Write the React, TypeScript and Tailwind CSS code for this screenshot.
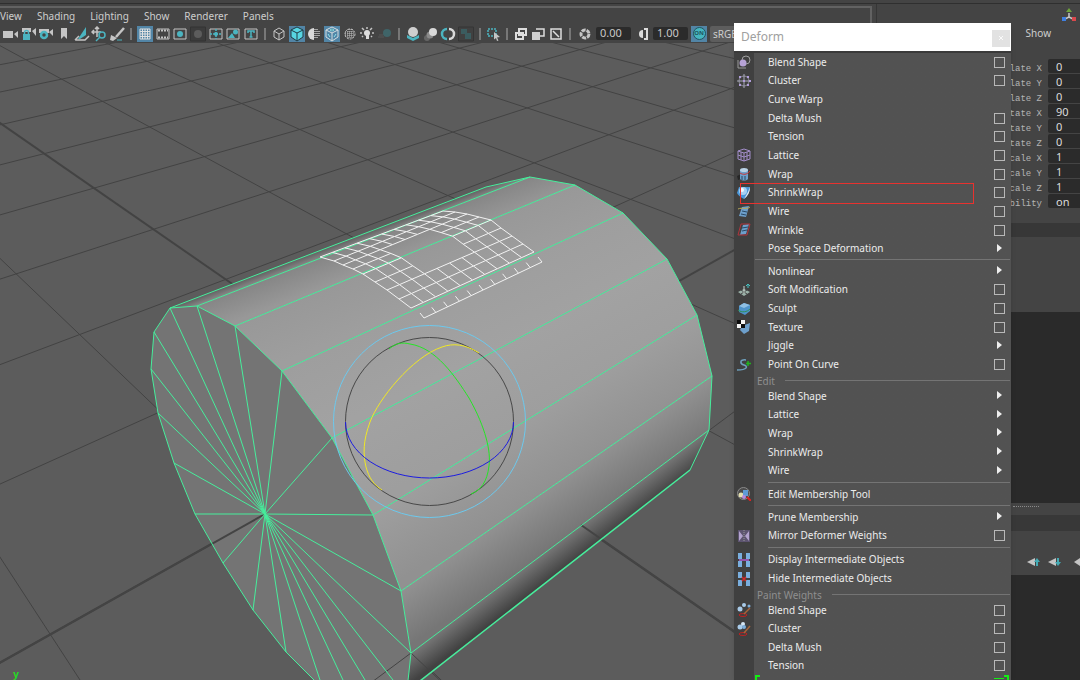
import type { ReactNode } from "react";

type Pt = [number, number];

// ---------- viewport ----------

// ground plane, u/v in grid units around the origin
function project(u: number, v: number): Pt {
  const w = 1 + 0.1378 * u + 0.1212 * v;
  return [(430 - 71.05 * u + 195.95 * v) / w, (421 - 32.3 * u - 29.8 * v) / w];
}

function lerp(a: Pt, b: Pt, t: number): Pt {
  return [a[0] + (b[0] - a[0]) * t, a[1] + (b[1] - a[1]) * t];
}

function Line({ a, b }: { a: Pt; b: Pt }) {
  return <line x1={a[0]} y1={a[1]} x2={b[0]} y2={b[1]} />;
}

const gridLines: { a: Pt; b: Pt; axis: boolean }[] = [];
for (let v = -2; v <= 14; v++) {
  gridLines.push({ a: project(20, v), b: project(-3, v), axis: v === 0 });
}
for (let u = -2; u <= 16; u++) {
  gridLines.push({ a: project(u, u < 0 ? -3 : -4), b: project(u, 20), axis: u === 0 });
}

const front: Pt[] = [
  [170, 308], [197, 306], [235, 326], [282, 371], [332, 438],
  [373, 515], [401, 591], [411, 653], [407, 690],
];
const back: Pt[] = [
  [486, 187], [530, 177], [575, 185], [623, 213], [667, 259],
  [697, 315], [712, 376], [709, 430], [690, 470],
];
const shades = ["#626262", "#868686", "#989898", "#9e9e9e", "#a2a2a2", "#9e9e9e", "#919191", "#767676", "#424242"];
const rimLeft: Pt[] = [
  [314, 680], [286, 652], [253, 610], [223, 563], [195, 514],
  [174, 463], [158, 413], [151, 369], [154, 332], [170, 308],
];
const center: Pt = [265, 514];
const bottomSpokes: Pt[] = [[320, 680], [343, 680], [365, 680], [393, 680]];

const patchLeft: Pt[] = [
  [320, 257], [334, 261], [343, 265], [353, 269], [363, 274],
  [375, 282], [387, 290], [399, 299], [411, 308],
];
const patchRight: Pt[] = [
  [443, 211], [455, 212], [467, 214], [479, 217], [491, 220],
  [501, 228], [512, 236], [523, 244], [534, 252],
];

function points(list: Pt[]) {
  return list.map((p) => p.join(",")).join(" ");
}

function Strip({ i }: { i: number }) {
  const a = front[i];
  const b = back[i];
  const c = back[i + 1];
  const d = front[i + 1];
  // shade runs across the strip, perpendicular to its edges
  const mid = lerp(a, b, 0.5);
  const dir: Pt = [b[0] - a[0], b[1] - a[1]];
  const len = Math.hypot(dir[0], dir[1]);
  const normal: Pt = [-dir[1] / len, dir[0] / len];
  const other = lerp(d, c, 0.5);
  const dist = (other[0] - mid[0]) * normal[0] + (other[1] - mid[1]) * normal[1];
  return (
    <>
      <linearGradient
        id={`strip-${i}`}
        gradientUnits="userSpaceOnUse"
        x1={mid[0]}
        y1={mid[1]}
        x2={mid[0] + normal[0] * dist}
        y2={mid[1] + normal[1] * dist}
      >
        <stop offset="0" stopColor={shades[i]} />
        <stop offset="1" stopColor={shades[i + 1]} />
      </linearGradient>
      <polygon points={points([a, b, c, d])} fill={`url(#strip-${i})`} />
    </>
  );
}

function Patch() {
  const cells: ReactNode[] = [];
  for (let row = 0; row <= 8; row++) {
    for (let col = 0; col < 10; col++) {
      if (row > 2 && row < 6 && col >= 3 && col < 7) continue;
      const l = patchLeft[row];
      const r = patchRight[row];
      cells.push(<Line key={`r${row}-${col}`} a={lerp(l, r, col / 10)} b={lerp(l, r, (col + 1) / 10)} />);
    }
  }
  for (let col = 0; col <= 10; col++) {
    for (let row = 0; row < 8; row++) {
      if (col > 3 && col < 7 && row >= 2 && row < 6) continue;
      const a = lerp(patchLeft[row], patchRight[row], col / 10);
      const b = lerp(patchLeft[row + 1], patchRight[row + 1], col / 10);
      cells.push(<Line key={`c${row}-${col}`} a={a} b={b} />);
    }
    const p = lerp([424, 318], [542, 262], col / 10);
    cells.push(<Line key={`t${col}`} a={p} b={[p[0] - 4, p[1] - 5]} />);
  }
  return (
    <g stroke="#f2f2f2" strokeWidth="1">
      {cells}
      <Line a={[424, 318]} b={[542, 262]} />
    </g>
  );
}

function Viewport() {
  return (
    <svg viewBox="0 43 872 637" preserveAspectRatio="xMinYMin slice" className="block h-full w-full bg-[#5c5c5c]" role="img" aria-label="Perspective view">
      <g stroke="#434343">
        {gridLines.map((l, i) => (
          <g key={i} strokeWidth={l.axis ? 2 : 1}>
            <Line a={l.a} b={l.b} />
          </g>
        ))}
      </g>
      <polygon points={points([...rimLeft, ...front.slice(1)])} fill="#747474" />
      {front.slice(0, -1).map((_, i) => (
        <Strip key={i} i={i} />
      ))}
      <g stroke="#444444">
        <g strokeWidth="2">
          <Line a={center} b={project(0, -3)} />
          <Line a={[581, 525]} b={project(-3, 0)} />
        </g>
        <Line a={[411, 653]} b={project(-1, -2)} />
        <Line a={[411, 653]} b={project(-2, -1)} />
      </g>
      <g stroke="#46ee9c" fill="none">
        <polyline points={points(rimLeft)} />
        <polyline points={points(front)} />
        <polyline points={points(back)} />
        {front.slice(0, -1).map((p, i) => (
          <Line key={i} a={p} b={back[i]} />
        ))}
        <g strokeWidth="1.5">
          <Line a={[420, 681]} b={[690, 470]} />
        </g>
        {[...rimLeft.slice(1), ...front.slice(1, -1), ...bottomSpokes].map((p, i) => (
          <Line key={i} a={center} b={p} />
        ))}
      </g>
      <Patch />
      <g fill="none">
        <circle cx="429.5" cy="421.5" r="96" stroke="#6cc9ee" />
        <circle cx="429.5" cy="421.5" r="84" stroke="#484848" />
        <path d="M389 349C396 343 402 342 410 344C436 348 455 376 469 398C486 428 491 452 489 466C487 482 481 490 471 494" stroke="#25e625" />
        <path d="M479 353C465 344 453 343 442 347C412 357 378 400 370 422C363 441 363 454 366 467C369 478 374 485 382 490" stroke="#f0e824" />
        <path d="M345.5 422A84 56 0 0 0 513.5 422" stroke="#1c1ce0" />
      </g>
      <text x="13" y="678" fill="#1fe01f" fontSize="10" fontWeight="bold" fontFamily="Liberation Mono, monospace">y</text>
    </svg>
  );
}

// ---------- toolbar ----------

const T = "#4bb4c0";
const G = "#c4c4c4";

const tools: Record<string, ReactNode> = {
  camera: <path d="M0 5h10v7H0zM11 8l4-3v7z" fill={G} />,
  cameraLock: (
    <>
      <path d="M1 2h9v4H1zM11 5l4-3v8z" fill={G} />
      <path d="M2 8h7v6H2z" fill={T} />
      <path d="M3.5 8V6.5a2 2 0 0 1 4 0V8" stroke={T} strokeWidth="1.5" fill="none" />
    </>
  ),
  cameraGear: (
    <>
      <path d="M1 3h10v4H1zM11 6l4-3v7z" fill={G} />
      <circle cx="6" cy="9" r="3" stroke={T} strokeWidth="2.5" fill="#444" />
    </>
  ),
  bookmark: <path d="M5 2h6v11l-3-3-3 3z" fill={G} />,
  plane: (
    <>
      <path d="M4 13l8-12v8l-6 4z" fill={T} />
      <path d="M1 14l4-4M1 14h10l4-4" fill="none" stroke={G} strokeWidth="1.5" />
    </>
  ),
  panZoom: (
    <>
      <path d="M6 1v10M1 6h9M4 3l2-2 2 2M3 4L1 6l2 2" stroke={G} strokeWidth="1.5" fill="none" />
      <circle cx="11" cy="9" r="3" stroke={T} strokeWidth="1.5" fill="#444" />
      <path d="M9 11l-4 4" stroke={T} strokeWidth="1.5" />
    </>
  ),
  brush: (
    <>
      <path d="M15 2L7 11" stroke={G} strokeWidth="2.5" />
      <path d="M2 9l6 3-4 3-3-1z" fill={G} />
      <path d="M8 14h5" stroke={T} />
    </>
  ),
  grid: <path d="M3 3h10v10H3zM5.5 3v10M8 3v10M10.5 3v10M3 5.5h10M3 8h10M3 10.5h10" stroke="#e0e0e0" fill="none" />,
  film: (
    <>
      <path d="M2 3h12v10H2z" stroke={G} fill="none" />
      <path d="M3 4.5h10M3 11.5h10" stroke={G} strokeDasharray="2 1" strokeWidth="2" />
    </>
  ),
  gate: (
    <>
      <path d="M2 3h12v10H2z" stroke={G} fill="none" />
      <circle cx="8" cy="8" r="3" fill={T} />
    </>
  ),
  mask: (
    <>
      <path d="M.5 1h15v14H.5z" stroke="#333" fill="#3c3c3c" />
      <circle cx="8" cy="8" r="4" fill="#5c5c5c" />
    </>
  ),
  chart: (
    <>
      <path d="M2 3h12v10H2z" stroke={G} fill="none" />
      <path d="M8 3v10M2 8h12" stroke={T} strokeDasharray="2 1" strokeWidth="1.5" />
      <circle cx="8" cy="8" r="2" fill={T} />
    </>
  ),
  picture: (
    <>
      <path d="M2 3h12v10H2z" stroke={G} fill="none" />
      <circle cx="10.5" cy="6" r="2.5" fill={T} />
      <path d="M3 12l4-5 3 5z" fill={T} />
    </>
  ),
  title: (
    <>
      <path d="M2 3h12v10H2z" stroke={G} fill="none" />
      <path d="M5 7V5h6v2M8 5v6M6.5 11h3" stroke={T} strokeWidth="1.5" fill="none" />
    </>
  ),
  cube: <path d="M8 2l5 3v6l-5 3-5-3V5zM3 5l5 3 5-3M8 8v6" stroke={G} fill="none" />,
  cubeSolid: (
    <>
      <path d="M8 1l6 3v7l-6 4-6-4V4z" fill="#57d5e2" stroke="#213a44" />
      <path d="M2 4l6 3 6-3M8 7v8" stroke="#213a44" fill="none" />
    </>
  ),
  sphereHalf: (
    <>
      <path d="M8 2a6 6 0 0 0 0 12z" fill="#dadada" />
      <path d="M9 3v10M11 3v10M13 5v6" stroke={G} strokeDasharray="1 1" strokeWidth="1.5" />
    </>
  ),
  cubeWire: (
    <>
      <path d="M8 1l6 3v7l-6 4-6-4V4zM2 4l6 3 6-3M8 7v8" stroke="#d6dde0" fill="none" />
      <path d="M6 4l2-1 2 1-2 1zM4 8l2 3M12 8l-2 3" stroke="#8fe5ee" />
    </>
  ),
  sphereGrid: (
    <>
      <circle cx="8" cy="8" r="5" stroke={G} strokeDasharray="2 1" fill="none" />
      <path d="M6 3v10M8 3v10M10 3v10M3 6h10M3 8h10M3 10h10" stroke={G} strokeDasharray="1 1" />
    </>
  ),
  light: (
    <>
      <circle cx="8" cy="7" r="3" fill="#dcdcdc" />
      <path d="M7 9h3v4H7z" fill="#dcdcdc" />
      <path d="M8 1v2M1 7h2M13 7h2M3 2l2 2M13 2l-2 2M3 11l1-1M13 11l-1-1" stroke={G} strokeWidth="1.5" />
    </>
  ),
  shadowDim: (
    <>
      <circle cx="10" cy="7" r="4" fill="#3f6468" />
      <path d="M1 11h6M2 9h4" stroke="#505050" strokeWidth="1.5" />
    </>
  ),
  occlusion: (
    <>
      <path d="M2 9l6 3 6-3v3l-6 3-6-3z" fill={T} />
      <circle cx="8" cy="6" r="5" fill="#cfcfcf" />
    </>
  ),
  motion: (
    <>
      <circle cx="4" cy="12" r="3" fill="#666" />
      <circle cx="7" cy="9" r="3.5" fill="#8a8a8a" />
      <circle cx="10" cy="6" r="4" fill="#d8d8d8" />
    </>
  ),
  aa: (
    <>
      <path d="M7 3a5 5 0 0 0 0 10" stroke={T} strokeWidth="2.5" fill="none" />
      <path d="M9 3a5 5 0 0 1 0 10" stroke="#d8d8d8" strokeWidth="2.5" fill="none" />
    </>
  ),
  peel: (
    <>
      <path d="M.5 1h15v14H.5z" stroke="#353535" fill="#404040" />
      <path d="M3 3h6v5H3zM7 7h6v6H7z" fill="#3b5c5f" />
    </>
  ),
  isolate: (
    <>
      <path d="M2 3h8v7H2z" stroke={T} strokeWidth="1.5" strokeDasharray="2 1" fill="none" />
      <path d="M8 6l6 5-3 .5 1.5 3-1.5.5-1-3-2 1.5z" fill={G} />
    </>
  ),
  xray: (
    <>
      <path d="M6 3h7v6H6z" stroke="#ddd" strokeWidth="2" fill="none" />
      <path d="M3 7h7v6H3z" stroke="#ddd" strokeWidth="2" fill="none" />
    </>
  ),
  joints: (
    <>
      <path d="M6 3h8v7H6" stroke="#ddd" strokeWidth="1.5" fill="none" />
      <path d="M2 6h8v8H2z" fill="#d0d0d0" />
    </>
  ),
  xrayActive: (
    <>
      <path d="M3 3h10v10H3z" stroke="#ddd" strokeWidth="1.5" fill="none" />
      <path d="M5 5l6 6" stroke="#ddd" strokeWidth="1.5" />
    </>
  ),
  aperture: <circle cx="8" cy="8" r="4" stroke={G} strokeWidth="3" strokeDasharray="4 1" fill="none" />,
  contrast: (
    <>
      <path d="M10 3h3v10h-3" stroke="#ddd" strokeWidth="2" fill="none" />
      <path d="M9 4a4 4 0 0 0 0 8z" fill="#ddd" />
    </>
  ),
};

const toolGroups: string[][] = [
  ["camera", "cameraLock", "cameraGear", "bookmark", "plane", "panZoom", "brush"],
  ["grid", "film", "gate", "mask", "chart", "picture", "title"],
  ["cube", "cubeSolid", "sphereHalf", "cubeWire", "sphereGrid", "light", "shadowDim"],
  ["occlusion", "motion", "aa", "peel"],
  ["isolate"],
  ["xray", "joints", "xrayActive"],
];
const groupWidths = ["w-[124px]", "w-[124px]", "w-[124px]", "w-[71px]", "w-[17px]", "w-[53px]"];
const activeTools = ["grid", "cubeSolid", "cubeWire"];

function ToolButton({ name }: { name: string }) {
  return (
    <button
      type="button"
      aria-label={name}
      className={`flex size-4 items-center justify-center ${activeTools.includes(name) ? "bg-[#5285a6]" : ""}`}
    >
      <svg viewBox="0 0 16 16" className="size-4">{tools[name]}</svg>
    </button>
  );
}

function Toolbar() {
  return (
    <div className="flex h-[19px] items-center overflow-hidden pl-[2px]">
      {toolGroups.map((group, i) => (
        <div key={i} className="flex shrink-0 items-center">
          <div className={`flex justify-around ${groupWidths[i]}`}>
            {group.map((name) => (
              <ToolButton key={name} name={name} />
            ))}
          </div>
          <div className="mx-1 h-3 w-[2px] bg-[#777777]" />
        </div>
      ))}
      <div className="flex shrink-0 items-center gap-[3px] pl-[2px]">
        <ToolButton name="aperture" />
        <input aria-label="Exposure" defaultValue="0.00" className="h-[13px] w-[35px] rounded-xs bg-[#2b2b2b] pl-1 text-[11px] text-[#c8c8c8]" />
        <ToolButton name="contrast" />
        <input aria-label="Gamma" defaultValue="1.00" className="h-[13px] w-[35px] rounded-xs bg-[#2b2b2b] pl-1 text-[11px] text-[#c8c8c8]" />
        <button type="button" className="flex size-4 items-center justify-center bg-[#5285a6]">
          <span className="flex size-[13px] items-center justify-center rounded-full border border-[#1f5560] bg-[#46b5bf] text-[6px] font-bold text-[#1f5560]">ON</span>
        </button>
        <button type="button" className="h-4 w-7 rounded-xs bg-[#5d5d5d] pl-[3px] text-left leading-4">sRGB</button>
      </div>
    </div>
  );
}

// ---------- deform menu ----------

const B = "#6d9fcb";

const menuIcons: Record<string, ReactNode> = {
  blend: (
    <>
      <path d="M1 5v8h8" stroke="#9a9a9a" fill="none" />
      <circle cx="9" cy="5" r="4" stroke="#a0a0a0" fill="none" />
      <circle cx="6" cy="8" r="3.5" fill="#b7a3d6" />
    </>
  ),
  cluster: (
    <>
      <circle cx="7" cy="7" r="5" stroke="#8f8f9c" fill="none" />
      <path d="M7 0v14M0 7h14" stroke="#a9a9b8" />
      <path d="M2 2h2v2H2zM10 2h2v2h-2zM2 10h2v2H2zM10 10h2v2h-2zM6 6h2v2H6zM12 6h2v2h-2z" fill="#b19ddb" />
    </>
  ),
  lattice: <path d="M1 3l6-2 6 2v8l-6 2-6-2zM1 3l6 2 6-2M7 5v8M1 7l6 2 6-2M4 4v8M10 4v8" stroke="#a28dc9" fill="none" />,
  wrap: (
    <>
      <path d="M0 9l4-2v5l-3 1z" fill="#262626" />
      <path d="M3 3v9c2 2 6 2 8 0V3z" fill={B} />
      <ellipse cx="7" cy="3" rx="4" ry="2" fill="#b9d2e6" />
      <path d="M3 6c3 2 7 2 10-2" stroke="#c33" fill="none" />
      <path d="M5 9v4M8 9v4" stroke="#2c4660" />
    </>
  ),
  shrink: (
    <>
      <path d="M2 1h11c0 5-2 9-6 12C3 11 1 9 0 7z" fill="#4a97da" />
      <circle cx="6" cy="5" r="4" fill="#a5d0f2" />
      <circle cx="5" cy="4" r="2" fill="#f2f9ff" />
      <path d="M7 13c4-3 6-7 6-12l-2 5z" fill="#e8e8e8" />
    </>
  ),
  wire: (
    <>
      <path d="M5 3l7-1-3 11-7-1z" fill={B} />
      <path d="M1 5c4-2 8 1 12-2" stroke="#b6a85a" fill="none" />
      <path d="M5 7l5 1M4 10l5 1" stroke="#294966" />
    </>
  ),
  wrinkle: (
    <>
      <path d="M6 2l6-1-3 10-6 1z" fill={B} />
      <path d="M4 1h9l-3 11H1z" stroke="#b0343c" fill="none" />
      <path d="M5 5l6-1M5 8l5-1" stroke="#294966" />
    </>
  ),
  soft: (
    <>
      <path d="M1 9l6-3 6 3-6 4z" fill="#9bb1a8" />
      <path d="M4 7l6 4M10 7l-6 4" stroke="#444" />
      <path d="M7 3v7" stroke="#c8d4ce" />
      <path d="M11 1v4M9 3l2-2 2 2" stroke="#45c2c2" fill="none" />
    </>
  ),
  sculpt: (
    <>
      <path d="M2 4l5-3 6 2v6l-5 4-6-3z" fill="#4f94cb" />
      <path d="M2 4l5 2 6-3-6-2z" fill="#8fc0e4" />
      <path d="M1 8c4 3 9 2 12-1" stroke="#2f8f55" fill="none" />
    </>
  ),
  texture: (
    <>
      <path d="M5 6l8-3-1 8-5 3-4-4z" fill={B} />
      <path d="M0 0h8v8H0z" fill="#0d0d0d" />
      <path d="M4 0h4v4H4zM0 4h4v4H0z" fill="#f5f5f5" />
    </>
  ),
  curve: (
    <>
      <path d="M9 2C2 1 3 6 7 7s4 5-7 5" stroke="#6ea0bd" strokeWidth="1.5" fill="none" />
      <path d="M11 3v5M9 5.5h5" stroke="#1fb31f" strokeWidth="1.5" />
    </>
  ),
  membership: (
    <>
      <circle cx="6.5" cy="6.5" r="6" stroke="#8a8a8a" fill="#4c4c4c" />
      <circle cx="4" cy="8" r="2.5" fill="#e4dfae" />
      <path d="M6 3h5v6H6z" fill="#5f9bd6" />
      <circle cx="7" cy="10" r="2" fill="#b58ae0" />
      <path d="M10 10l4 4" stroke="#d22" strokeWidth="2" />
    </>
  ),
  mirror: (
    <>
      <path d="M1 1h12v12H1z" fill="#5d5470" />
      <path d="M2 2l4 5-4 5zM12 2L8 7l4 5z" fill="#b3a3cf" />
      <path d="M7 1v12" stroke="#999" strokeDasharray="1 1" />
    </>
  ),
  show: (
    <>
      <path d="M1 0h4v6H1zM9 0h4v6H9zM1 8h4v6H1zM9 8h4v6H9z" fill="#79aede" />
      <path d="M2 7h10" stroke="#b05ad0" strokeWidth="1.5" />
    </>
  ),
  hide: (
    <>
      <path d="M1 0h4v6H1zM9 0h4v6H9zM1 8h4v6H1zM9 8h4v6H9z" fill="#79aede" />
      <path d="M5 5l4 4M9 5l-4 4" stroke="#d32a2a" strokeWidth="1.5" />
    </>
  ),
  paintBlend: (
    <>
      <circle cx="3" cy="6" r="2.5" fill="#a9cbe9" />
      <circle cx="7" cy="2" r="2" fill="#a9cbe9" />
      <circle cx="12" cy="3" r="1.5" fill="#7fb0dc" />
      <ellipse cx="6" cy="12" rx="4" ry="1.5" stroke="#b22" fill="none" />
      <path d="M13 5l-6 6" stroke="#a8653a" strokeWidth="1.5" />
    </>
  ),
  paintCluster: (
    <>
      <circle cx="3" cy="5" r="2.5" fill="#a9cbe9" />
      <circle cx="6" cy="2" r="2" fill="#d6e7f5" />
      <circle cx="7" cy="5" r="2" fill="#7fb0dc" />
      <ellipse cx="6" cy="12" rx="4" ry="1.5" stroke="#b22" fill="none" />
      <path d="M13 4l-6 7" stroke="#a8653a" strokeWidth="1.5" />
    </>
  ),
};

interface Item {
  label: string;
  icon?: string;
  end?: "box" | "sub";
}

function MenuRow({ label, icon, end }: Item) {
  return (
    <li className="flex items-center">
      <span className="flex w-5 shrink-0 justify-center">
        {icon && <svg viewBox="0 0 14 14" className="size-3.5">{menuIcons[icon]}</svg>}
      </span>
      <button type="button" className="flex-1 pl-[14px] text-left">{label}</button>
      {end === "box" && (
        <input type="checkbox" aria-label={`${label} options`} className="mr-[6px] size-[11px] appearance-none border border-[#b8b8b8]" />
      )}
      {end === "sub" && (
        <svg viewBox="0 0 5 8" className="mr-[9px] mb-[2px] h-2 w-[5px]">
          <path d="M0 0l5 4-5 4z" fill="#eeeeee" />
        </svg>
      )}
    </li>
  );
}

function MenuGroup({ items, height }: { items: Item[]; height: string }) {
  return <ul className={`grid auto-rows-fr ${height}`}>{items.map((it) => <MenuRow key={it.label} {...it} />)}</ul>;
}

function Divider({ wide }: { wide?: boolean }) {
  return <hr className={`mr-px border-t border-[#747474] ${wide ? "mt-px mb-[2px] ml-[21px]" : "my-[2px] ml-[34px]"}`} />;
}

function SectionTitle({ children }: { children: ReactNode }) {
  return (
    <div className="flex h-[13px] items-center gap-[10px] pl-[23px] text-[#8f8f8f]">
      <span className="leading-3">{children}</span>
      <span className="mr-px h-px flex-1 bg-[#747474]" />
    </div>
  );
}

const createItems: Item[] = [
  { label: "Blend Shape", icon: "blend", end: "box" },
  { label: "Cluster", icon: "cluster", end: "box" },
  { label: "Curve Warp" },
  { label: "Delta Mush", end: "box" },
  { label: "Tension", end: "box" },
  { label: "Lattice", icon: "lattice", end: "box" },
  { label: "Wrap", icon: "wrap", end: "box" },
  { label: "ShrinkWrap", icon: "shrink", end: "box" },
  { label: "Wire", icon: "wire", end: "box" },
  { label: "Wrinkle", icon: "wrinkle", end: "box" },
  { label: "Pose Space Deformation", end: "sub" },
];
const nonlinearItems: Item[] = [
  { label: "Nonlinear", end: "sub" },
  { label: "Soft Modification", icon: "soft", end: "box" },
  { label: "Sculpt", icon: "sculpt", end: "box" },
  { label: "Texture", icon: "texture", end: "box" },
  { label: "Jiggle", end: "sub" },
  { label: "Point On Curve", icon: "curve", end: "box" },
];
const editItems: Item[] = ["Blend Shape", "Lattice", "Wrap", "ShrinkWrap", "Wire"].map((label) => ({ label, end: "sub" }));
const paintItems: Item[] = [
  { label: "Blend Shape", icon: "paintBlend", end: "box" },
  { label: "Cluster", icon: "paintCluster", end: "box" },
  { label: "Delta Mush", end: "box" },
  { label: "Tension", end: "box" },
];

function DeformMenu() {
  return (
    <section className="absolute top-[23px] right-[69px] bottom-0 w-[277px] overflow-hidden bg-linear-to-r from-[#404040] from-[20px] to-[#525252] to-[20px] text-[10px] text-[#ececec] shadow-md">
      <header className="flex h-[30px] items-center justify-between border-b-2 border-[#3a3a3a] bg-white pl-[7px] text-xs text-[#a0a0a0]">
        <h2>Deform</h2>
        <button type="button" aria-label="Close" className="mt-[2px] mr-px flex h-[17px] w-[18px] items-center justify-center bg-[#e2e2e2]">
          <svg viewBox="0 0 6 6" className="size-1.5"><path d="M1 1l4 4M5 1L1 5" stroke="#fafafa" /></svg>
        </button>
      </header>
      <div className="relative">
        <MenuGroup items={createItems} height="h-[205px]" />
        {/* red frame around ShrinkWrap */}
        <div className="pointer-events-none absolute top-[130px] right-[37px] left-[6px] h-[21px] border border-[#e8322f]" />
      </div>
      <Divider wide />
      <MenuGroup items={nonlinearItems} height="h-[112px]" />
      <SectionTitle>Edit</SectionTitle>
      <MenuGroup items={editItems} height="h-[93px]" />
      <Divider />
      <MenuGroup items={[{ label: "Edit Membership Tool", icon: "membership" }]} height="h-[18px]" />
      <Divider />
      <MenuGroup
        items={[{ label: "Prune Membership", end: "sub" }, { label: "Mirror Deformer Weights", icon: "mirror", end: "box" }]}
        height="h-[37px]"
      />
      <Divider />
      <MenuGroup
        items={[{ label: "Display Intermediate Objects", icon: "show" }, { label: "Hide Intermediate Objects", icon: "hide" }]}
        height="h-[38px]"
      />
      <SectionTitle>Paint Weights</SectionTitle>
      <MenuGroup items={paintItems} height="h-[74px]" />
      <div className="flex pr-[2px] pl-[21px]">
        <span className="mr-auto h-2 w-[5px] border-t-2 border-l-2 border-[#12f012]" />
        <span className="mt-[3px] h-px w-[10px] bg-[#12f012]" />
        <span className="h-2 w-[5px] border-t-2 border-r-2 border-[#12f012]" />
      </div>
    </section>
  );
}

// ---------- channel box ----------

const channels = [
  ["Translate X", "0"],
  ["Translate Y", "0"],
  ["Translate Z", "0"],
  ["Rotate X", "90"],
  ["Rotate Y", "0"],
  ["Rotate Z", "0"],
  ["Scale X", "1"],
  ["Scale Y", "1"],
  ["Scale Z", "1"],
  ["Visibility", "on"],
];

function LayerArrow({ down }: { down?: boolean }) {
  return (
    <button type="button" aria-label={down ? "Move layer down" : "Move layer up"}>
      <svg viewBox="0 0 14 10" className="block h-[10px] w-[14px]">
        <path d="M0 5l8-4v8z" fill="#c4c4c4" />
        <path d={down ? "M9 1h2v4h2l-3 4-3-4h2z" : "M9 9h2V5h2l-3-4-3 4h2z"} fill="#43aab4" />
      </svg>
    </button>
  );
}

function ChannelBox() {
  return (
    <aside className="flex w-[204px] shrink-0 flex-col border-l border-[#363636]">
      <div className="flex h-[22px] items-center justify-end pr-1">
        <svg viewBox="0 0 14 14" className="size-3.5">
          <path d="M7 5v4L3 11M7 9l4 2" stroke="#c8c8c8" strokeWidth="1.5" fill="none" />
          <path d="M7 0l3 4H4z" fill="#6fa53c" />
          <path d="M0 9h4v4H0z" fill="#3f7fe0" />
          <path d="M10 9h4v4h-4z" fill="#d9484c" />
        </svg>
      </div>
      <nav className="flex h-[33px] items-start justify-end pr-[29px]">
        <button type="button">Show</button>
      </nav>
      <div className="grid h-[149px] auto-rows-fr gap-px">
        {channels.map(([name, value]) => (
          <label key={name} className="flex items-center justify-end gap-[6px]">
            <span className="pt-[6px] font-['Liberation_Mono',monospace] text-[9px] leading-none text-[#b4b4b4]">{name}</span>
            <input defaultValue={value} className="h-full w-8 rounded-l-xs bg-[#2b2b2b] pl-2 text-[11px] text-[#dcdcdc]" />
          </label>
        ))}
      </div>
      <div className="h-[15px]" />
      <div className="h-[14px] bg-[#373737]" />
      <div className="h-[75px]" />
      <div className="h-[191px] bg-[#2a2a2a]" />
      <div className="h-3 pt-[3px] pl-[136px]">
        <div className="w-[26px] border-t border-dotted border-[#8a8a8a]" />
      </div>
      <div className="h-4 bg-[#383838]" />
      <div className="flex h-11 items-center justify-end overflow-hidden pt-[18px]">
        <div className="flex gap-[7px]">
          <LayerArrow />
          <LayerArrow down />
        </div>
        <svg viewBox="0 0 6 10" className="ml-3 h-[10px] w-[6px]"><path d="M0 5l6-4v8z" fill="#c4c4c4" /></svg>
      </div>
      <div className="flex-1 bg-[#2a2a2a]" />
    </aside>
  );
}

export default function App() {
  return (
    <div className="relative flex h-screen flex-col overflow-hidden bg-[#444444] font-['Noto_Sans',sans-serif] text-[10px] text-[#cdcdcd]">
      <div className="h-1 shrink-0 border-b border-[#2f2f2f]" />
      <div className="flex min-h-0 flex-1">
        <main className="mr-1 flex min-w-0 flex-1 flex-col pt-[2px]">
          <div className="shrink-0 border-t-2 border-r-2 border-[#626262]">
            <nav className="flex h-4 items-center gap-[15px]">
              {["View", "Shading", "Lighting", "Show", "Renderer", "Panels"].map((name) => (
                <button key={name} type="button">{name}</button>
              ))}
            </nav>
            <Toolbar />
          </div>
          <div className="min-h-0 flex-1">
            <Viewport />
          </div>
        </main>
        <ChannelBox />
      </div>
      <DeformMenu />
    </div>
  );
}
